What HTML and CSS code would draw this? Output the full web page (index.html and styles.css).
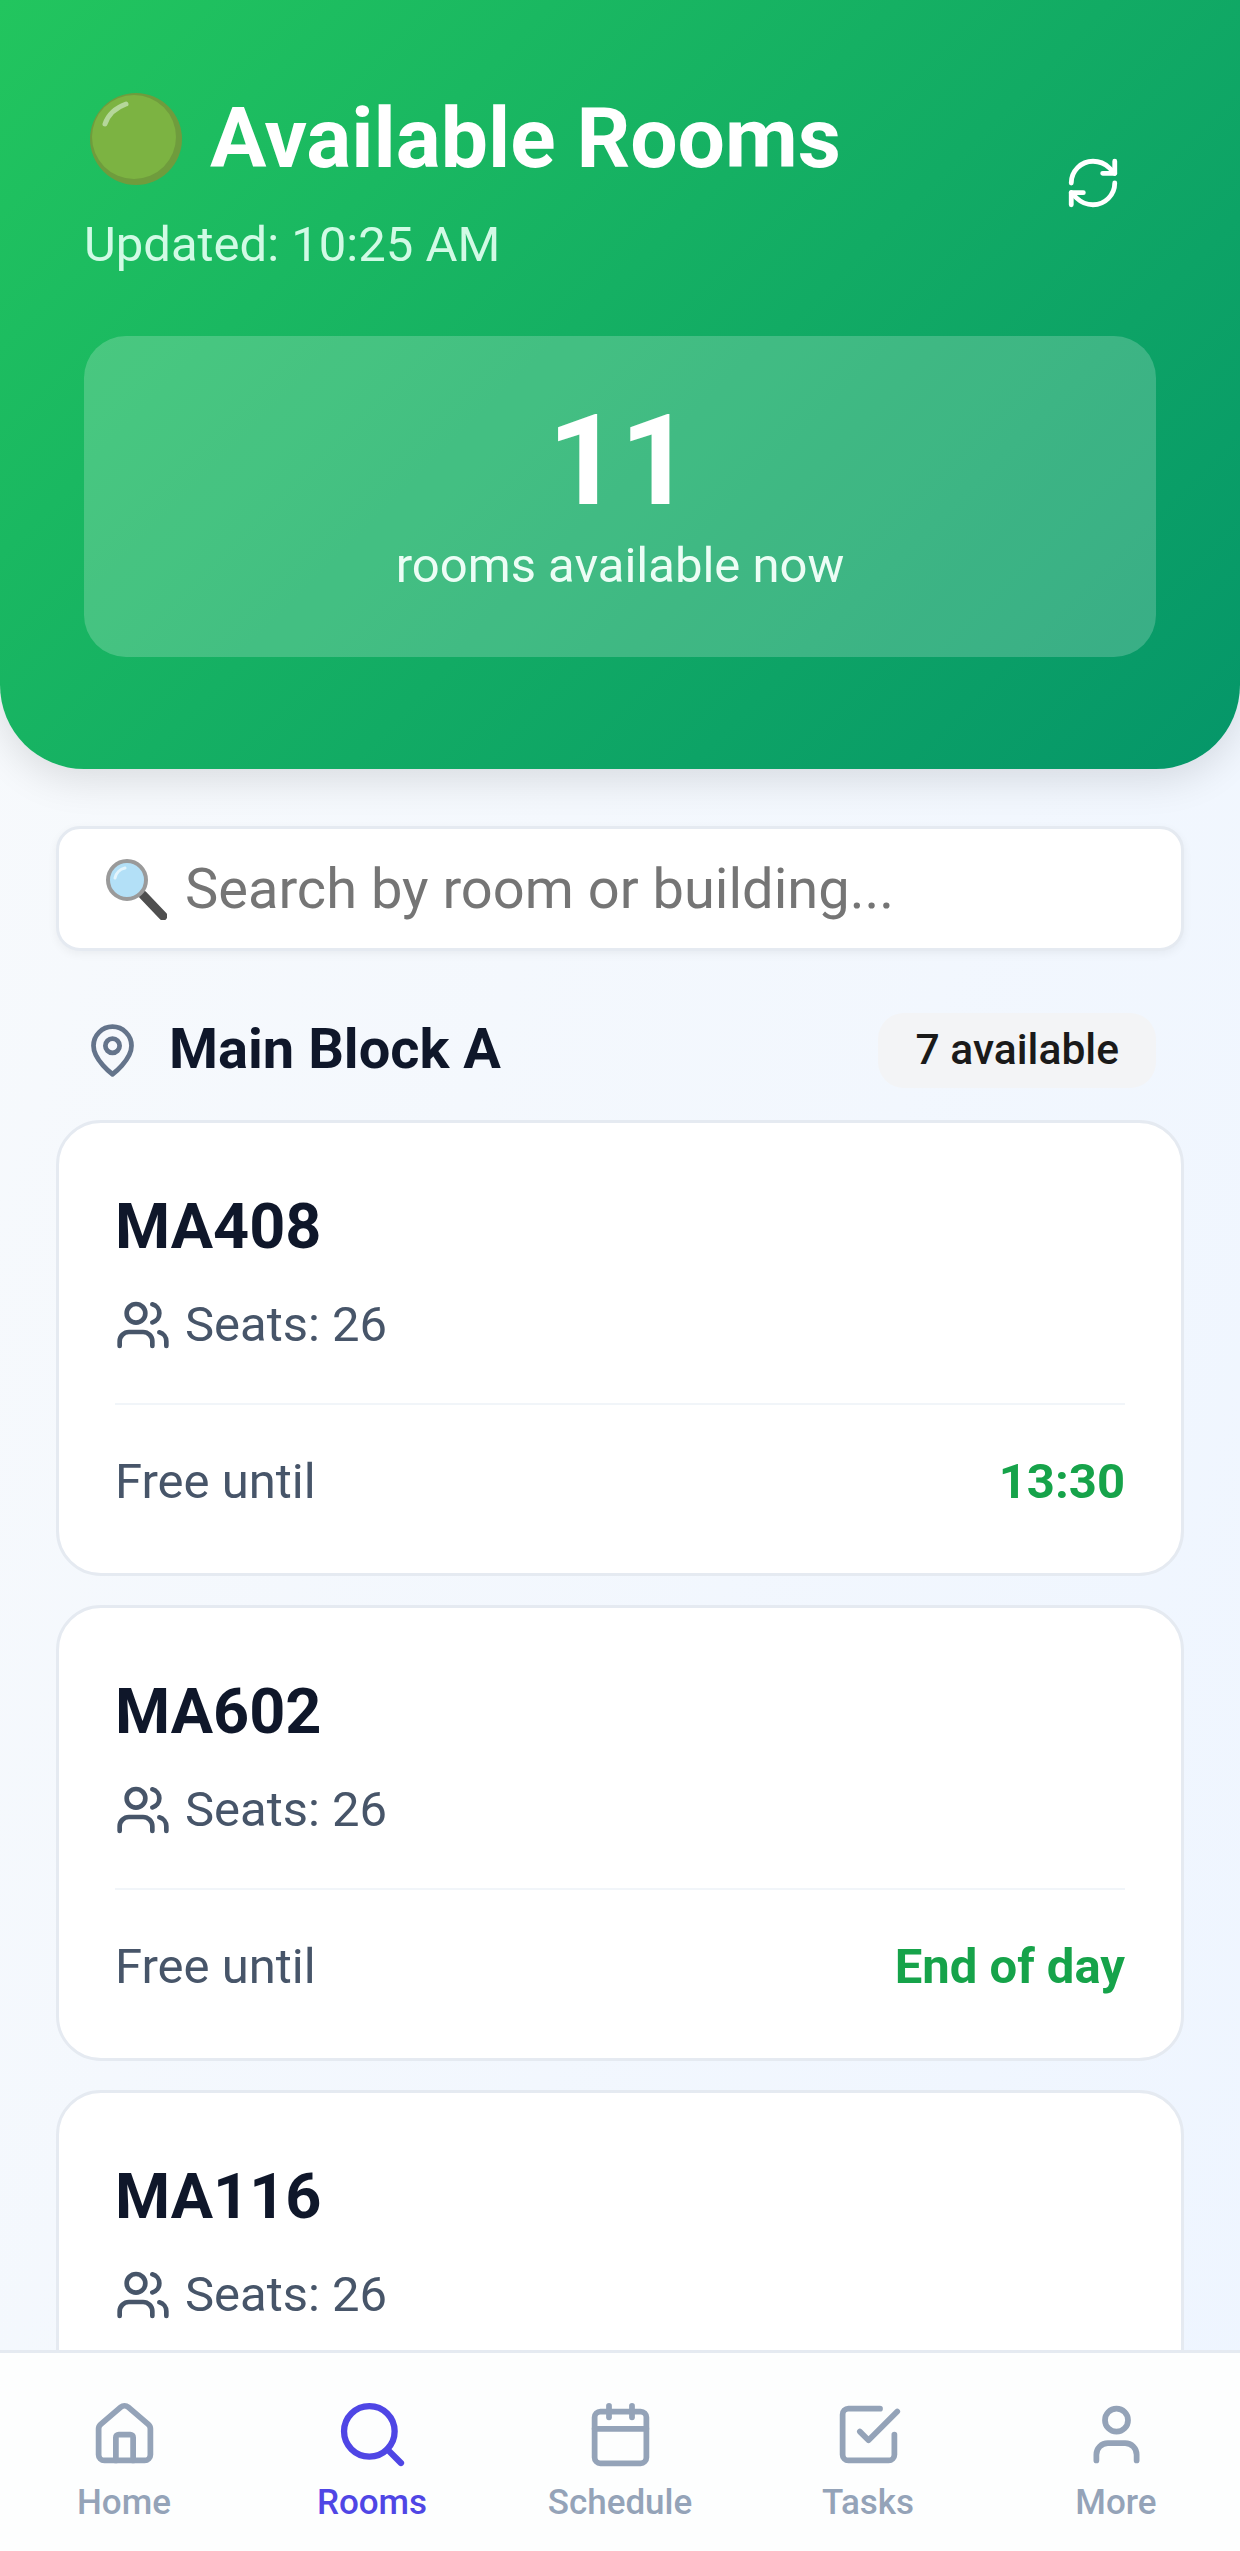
FILE: index.html
```html
<!DOCTYPE html>
<html>

<head>
    <meta charset="utf-8">
    <title>Available Rooms</title>
    <link rel="stylesheet" href="styles.css">
</head>

<body>
    <div class="app">
        <header class="top_header">
            <div class="header_row">
                <div>
                    <h1 class="page_title">
                        <svg class="title_emoji" viewBox="0 0 92 92">
                            <circle cx="46" cy="46" r="46" fill="#6f9c3d"/>
                            <circle cx="44" cy="44" r="42" fill="#7cb342"/>
                            <path d="M15 31c3-9 10-16 21-20" fill="none" stroke="#b5d79a" stroke-width="5" stroke-linecap="round"/>
                        </svg>
                        <span class="title_text">Available Rooms</span>
                    </h1>
                    <p class="updated_text">Updated: 10:25 AM</p>
                </div>
                <button class="refresh_button">
                    <svg class="icon refresh_icon" viewBox="0 0 24 24">
                        <path d="M3 12a9 9 0 0 1 9-9 9.75 9.75 0 0 1 6.74 2.74L21 8"/>
                        <path d="M21 3v5h-5"/>
                        <path d="M21 12a9 9 0 0 1-9 9 9.75 9.75 0 0 1-6.74-2.74L3 16"/>
                        <path d="M8 16H3v5"/>
                    </svg>
                </button>
            </div>
            <div class="stat_card">
                <div class="stat_number">11</div>
                <div class="stat_label">rooms available now</div>
            </div>
        </header>

        <main class="content">
            <div class="search_box">
                <svg class="search_emoji" viewBox="0 0 62 62">
                    <path d="M38 37l20 21" stroke="#4f4f4f" stroke-width="9" stroke-linecap="round"/>
                    <circle cx="22" cy="22" r="19" fill="#b3e0f7" stroke="#9a9a9a" stroke-width="4"/>
                    <path d="M10 20c1-5 5-9 10-10" fill="none" stroke="#e3f5fd" stroke-width="3" stroke-linecap="round"/>
                </svg>
                <span class="search_placeholder">Search by room or building...</span>
            </div>

            <div class="section_row">
                <div class="section_name">
                    <svg class="icon pin_icon" viewBox="0 0 24 24">
                        <path d="M20 10c0 6-8 12-8 12s-8-6-8-12a8 8 0 0 1 16 0Z"/>
                        <circle cx="12" cy="10" r="3"/>
                    </svg>
                    <h2 class="section_title">Main Block A</h2>
                </div>
                <span class="count_badge">7 available</span>
            </div>

            <div class="room_list">
                <div class="room_card">
                    <h3 class="room_name">MA408</h3>
                    <div class="room_seats">
                        <svg class="icon users_icon" viewBox="0 0 24 24">
                            <path d="M16 21v-2a4 4 0 0 0-4-4H6a4 4 0 0 0-4 4v2"/>
                            <circle cx="9" cy="7" r="4"/>
                            <path d="M22 21v-2a4 4 0 0 0-3-3.87"/>
                            <path d="M16 3.13a4 4 0 0 1 0 7.75"/>
                        </svg>
                        Seats: 26
                    </div>
                    <div class="room_footer">
                        <span>Free until</span>
                        <span class="free_time">13:30</span>
                    </div>
                </div>

                <div class="room_card">
                    <h3 class="room_name">MA602</h3>
                    <div class="room_seats">
                        <svg class="icon users_icon" viewBox="0 0 24 24">
                            <path d="M16 21v-2a4 4 0 0 0-4-4H6a4 4 0 0 0-4 4v2"/>
                            <circle cx="9" cy="7" r="4"/>
                            <path d="M22 21v-2a4 4 0 0 0-3-3.87"/>
                            <path d="M16 3.13a4 4 0 0 1 0 7.75"/>
                        </svg>
                        Seats: 26
                    </div>
                    <div class="room_footer">
                        <span>Free until</span>
                        <span class="free_time">End of day</span>
                    </div>
                </div>

                <div class="room_card">
                    <h3 class="room_name">MA116</h3>
                    <div class="room_seats">
                        <svg class="icon users_icon" viewBox="0 0 24 24">
                            <path d="M16 21v-2a4 4 0 0 0-4-4H6a4 4 0 0 0-4 4v2"/>
                            <circle cx="9" cy="7" r="4"/>
                            <path d="M22 21v-2a4 4 0 0 0-3-3.87"/>
                            <path d="M16 3.13a4 4 0 0 1 0 7.75"/>
                        </svg>
                        Seats: 26
                    </div>
                </div>
            </div>
        </main>

        <nav class="bottom_nav">
            <div class="nav_item">
                <svg class="icon nav_icon" viewBox="0 0 24 24">
                    <path d="M15 21v-8a1 1 0 0 0-1-1h-4a1 1 0 0 0-1 1v8"/>
                    <path d="M3 10a2 2 0 0 1 .709-1.528l7-5.999a2 2 0 0 1 2.582 0l7 5.999A2 2 0 0 1 21 10v9a2 2 0 0 1-2 2H5a2 2 0 0 1-2-2z"/>
                </svg>
                <span>Home</span>
            </div>
            <div class="nav_item nav_active">
                <svg class="icon nav_icon" viewBox="0 0 24 24">
                    <circle cx="11" cy="11" r="8"/>
                    <path d="m21 21-4.3-4.3"/>
                </svg>
                <span>Rooms</span>
            </div>
            <div class="nav_item">
                <svg class="icon nav_icon" viewBox="0 0 24 24">
                    <path d="M8 2v4"/>
                    <path d="M16 2v4"/>
                    <rect x="3" y="4" width="18" height="18" rx="2"/>
                    <path d="M3 10h18"/>
                </svg>
                <span>Schedule</span>
            </div>
            <div class="nav_item">
                <svg class="icon nav_icon" viewBox="0 0 24 24">
                    <path d="m9 11 3 3L22 4"/>
                    <path d="M21 12v7a2 2 0 0 1-2 2H5a2 2 0 0 1-2-2V5a2 2 0 0 1 2-2h11"/>
                </svg>
                <span>Tasks</span>
            </div>
            <div class="nav_item">
                <svg class="icon nav_icon" viewBox="0 0 24 24">
                    <path d="M19 21v-2a4 4 0 0 0-4-4H9a4 4 0 0 0-4 4v2"/>
                    <circle cx="12" cy="7" r="4"/>
                </svg>
                <span>More</span>
            </div>
        </nav>
    </div>
</body>

</html>
```

FILE: styles.css
```css
body {
    margin: 0;
    font-family: Roboto, "Liberation Sans", sans-serif;
    background: linear-gradient(110deg, #f8fafc 0%, #eef5ff 100%);
}

.app {
    height: 100vh;
    display: flex;
    flex-direction: column;
    overflow: hidden;
}

.icon {
    fill: none;
    stroke: currentColor;
    stroke-width: 2;
    stroke-linecap: round;
    stroke-linejoin: round;
    flex-shrink: 0;
}

/* header */
.top_header {
    flex-shrink: 0;
    padding: 84px 84px 112px;
    color: #fff;
    background: linear-gradient(135deg, #22c55e 0%, #059669 100%);
    border-radius: 0 0 84px 84px;
    box-shadow: 0 10px 40px rgba(0, 0, 0, 0.12);
}

.header_row {
    display: flex;
    justify-content: space-between;
    align-items: center;
}

.page_title {
    display: flex;
    align-items: center;
    gap: 28px;
    margin: 0;
    padding-left: 6px;
    font-size: 84px;
    line-height: 106px;
    font-weight: 700;
}

.title_emoji {
    width: 92px;
    height: 92px;
    margin-top: 4px;
}

.title_text {
    padding-top: 4px;
    line-height: 102px;
}

.updated_text {
    margin: 18px 0 0;
    font-size: 49px;
    line-height: 74px;
    color: #d1fae5;
}

.refresh_button {
    width: 126px;
    height: 126px;
    padding: 0;
    display: flex;
    align-items: center;
    justify-content: center;
    border: none;
    background: none;
    color: #fff;
}

.refresh_icon {
    width: 58px;
    height: 58px;
}

.stat_card {
    margin-top: 54px;
    padding: 57px 0 56px;
    border-radius: 42px;
    text-align: center;
    background: rgba(255, 255, 255, 0.2);
}

.stat_number {
    font-size: 126px;
    line-height: 136px;
    font-weight: 700;
}

.stat_label {
    margin-top: 2px;
    font-size: 49px;
    line-height: 70px;
    color: #ecfdf5;
}

/* content */
.content {
    flex: 1;
    min-height: 0;
    padding: 57px 56px 0;
    overflow: hidden;
}

.search_box {
    box-sizing: border-box;
    height: 125px;
    display: flex;
    align-items: center;
    gap: 18px;
    padding-left: 46px;
    background: #fff;
    border: 3px solid #e5eaf1;
    border-radius: 24px;
    box-shadow: 0 3px 10px rgba(0, 0, 0, 0.05);
}

.search_emoji {
    width: 62px;
    height: 62px;
}

.search_placeholder {
    font-size: 56px;
    color: #757575;
}

.section_row {
    display: flex;
    justify-content: space-between;
    align-items: center;
    margin: 62px 0 32px;
    padding: 0 28px;
}

.section_name {
    display: flex;
    align-items: center;
    gap: 28px;
}

.pin_icon {
    width: 57px;
    height: 57px;
    color: #64748b;
}

.section_title {
    margin: 0;
    padding-bottom: 3px;
    font-size: 56px;
    line-height: 69px;
    font-weight: 700;
    color: #0f172a;
}

.count_badge {
    box-sizing: border-box;
    height: 75px;
    padding: 0 37px 4px;
    display: flex;
    align-items: center;
    border-radius: 26px;
    font-size: 42.6px;
    font-weight: 500;
    color: #1a1a1a;
    background: #f3f4f6;
}

.room_list {
    display: flex;
    flex-direction: column;
    gap: 29px;
}

.room_card {
    flex-shrink: 0;
    padding: 64px 56px 61px;
    background: #fff;
    border: 3px solid #e5eaf1;
    border-radius: 45px;
}

.room_name {
    margin: 0;
    font-size: 63px;
    line-height: 80px;
    font-weight: 700;
    color: #0f172a;
}

.room_seats {
    display: flex;
    align-items: center;
    gap: 14px;
    margin-top: 28px;
    padding-bottom: 48px;
    font-size: 49px;
    line-height: 60px;
    color: #475569;
}

.users_icon {
    width: 56px;
    height: 56px;
}

.room_footer {
    display: flex;
    justify-content: space-between;
    padding-top: 47px;
    border-top: 2px solid #f1f5f9;
    font-size: 49px;
    line-height: 60px;
    color: #475569;
}

.free_time {
    font-weight: 700;
    color: #16a34a;
}

/* bottom nav */
.bottom_nav {
    flex-shrink: 0;
    height: 198px;
    display: grid;
    grid-template-columns: repeat(5, 1fr);
    background: #fdfefe;
    border-top: 3px solid #e5eaf1;
}

.nav_item {
    display: flex;
    flex-direction: column;
    align-items: center;
    gap: 14px;
    padding-top: 47px;
    font-size: 35px;
    line-height: 40px;
    font-weight: 500;
    color: #94a3b8;
}

.nav_icon {
    width: 69px;
    height: 69px;
}

.nav_active {
    color: #4f46e5;
}

.nav_active .nav_icon {
    transform: scale(1.1);
}
```
